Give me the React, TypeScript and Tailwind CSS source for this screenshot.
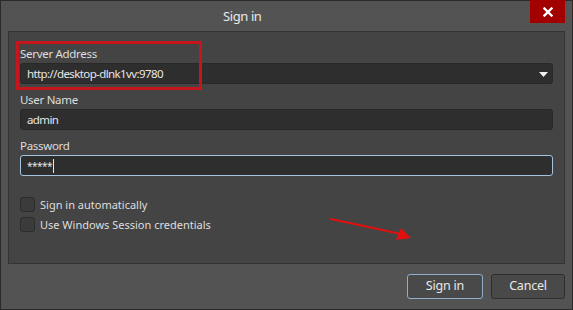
import React from 'react'

const font = { fontFamily: '"Noto Sans", "Open Sans", sans-serif' }

function Field({
  label,
  value,
  dropdown,
  focused,
  password,
}: {
  label: string
  value: string
  dropdown?: boolean
  focused?: boolean
  password?: boolean
}) {
  return (
    <div className="flex flex-col">
      <div className="h-[17px] text-[11.5px] leading-[16px] tracking-[-0.3px] text-[#dedede]">{label}</div>
      <div
        className={
          focused
            ? 'relative flex h-[21px] items-center rounded-[3px] border border-[#a7c4de] bg-[#2e2e2e] pl-[6px]'
            : 'relative flex h-[21px] items-center rounded-[3px] border border-[#282828] bg-[#2e2e2e] pl-[6px]'
        }
      >
        <span
          className={
            password
              ? 'text-[10px] leading-none tracking-[-0.5px] text-[#e6e6e6]'
              : 'text-[11.5px] leading-none tracking-[-0.6px] text-[#e6e6e6]'
          }
        >
          {value}
        </span>
        {password && <span className="ml-[1px] h-[14px] w-px bg-[#e6e6e6]" />}
        {dropdown && (
          <svg className="absolute right-[4px] top-[8px]" width="9" height="5" viewBox="0 0 9 5">
            <path d="M0 0 H9 L4.5 5 Z" fill="#f0f0f0" />
          </svg>
        )}
      </div>
    </div>
  )
}

function Checkbox({ label }: { label: string }) {
  return (
    <div className="flex h-[20px] items-center gap-[5px]">
      <div className="h-[15px] w-[15px] rounded-[3px] border border-[#2c2c2c] bg-[#3b3b3b]" />
      <span className="text-[11px] leading-none text-[#dedede]">{label}</span>
    </div>
  )
}

export default function App() {
  return (
    <div style={font} className="relative flex h-[310px] w-[573px] flex-col border border-[#2a2a2a] bg-[#535353]">
      <div className="relative flex h-[30px] shrink-0 items-start">
        <div className="w-full pt-[5px] pl-[222px] text-[13px] leading-[20px] tracking-[-0.4px] text-[#e8e8e8]">Sign in</div>
        <div className="absolute right-[7px] top-[-1px] flex h-[23px] w-[35px] items-center justify-center bg-[#a30000]">
          <svg width="10" height="10" viewBox="0 0 10 10">
            <path d="M1.5 1.5 L8.5 8.5 M8.5 1.5 L1.5 8.5" stroke="#ffffff" strokeWidth="2.4" strokeLinecap="square" />
          </svg>
        </div>
      </div>

      <div className="mx-[7px] flex h-[233px] flex-col border border-[#333333] bg-[#444444] px-[11px] pt-[14px]">
        <div className="flex flex-col gap-[8px]">
          <Field label="Server Address" value="http://desktop-dlnk1vv:9780" dropdown />
          <Field label="User Name" value="admin" />
          <Field label="Password" value="*****" focused password />
        </div>
        <div className="mt-[18px] flex flex-col">
          <Checkbox label="Sign in automatically" />
          <Checkbox label="Use Windows Session credentials" />
        </div>
      </div>

      <div className="flex flex-1 items-center justify-end gap-[8px] pr-[7px] pb-[1px]">
        <button className="h-[25px] w-[76px] rounded-[3px] border border-[#8eafcb] bg-[#494949] text-[12.5px] tracking-[-0.2px] text-[#e8e8e8]">
          Sign in
        </button>
        <button className="h-[25px] w-[74px] rounded-[3px] border border-[#2e2e2e] bg-[#494949] text-[12.5px] tracking-[-0.2px] text-[#e8e8e8]">
          Cancel
        </button>
      </div>

      {/* annotation overlays */}
      <div className="pointer-events-none absolute left-[15px] top-[40px] h-[49px] w-[186px] border-[3px] border-[#c4161c]" />
      <svg className="pointer-events-none absolute left-[328px] top-[214px]" width="86" height="26" viewBox="0 0 86 26">
        <path d="M2 4 L72 19" stroke="#e01010" strokeWidth="2.2" strokeLinecap="round" />
        <path d="M82 23 L67 25 L72 13 Z" fill="#e01010" />
      </svg>
    </div>
  )
}
